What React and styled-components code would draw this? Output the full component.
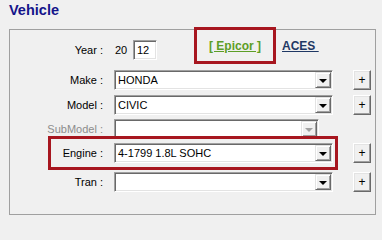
import React from 'react';
import styled, { createGlobalStyle } from 'styled-components';

const GlobalStyle = createGlobalStyle`
  body {
    margin: 0;
    background: #f0f0f0;
    font-family: "Liberation Sans", Arial, sans-serif;
    font-size: 11px;
    color: #000;
  }
`;

const Page = styled.div`
  width: 382px;
  height: 219px;
  background: #f0f0f0;
  overflow: hidden;
`;

const Title = styled.div`
  height: 29px;
  box-sizing: border-box;
  padding: 2px 0 0 9px;
  font-size: 14.5px;
  font-weight: bold;
  line-height: 16px;
  color: #14148a;
`;

const GroupBox = styled.div`
  margin-left: 9px;
  width: 367px;
  height: 186px;
  box-sizing: border-box;
  border: 1px solid #a0a0a0;
  padding-top: 10px;
`;

const Row = styled.div`
  display: flex;
  align-items: center;
  height: 20px;
  margin-top: ${p => p.$gap || 0}px;
`;

const Label = styled.div`
  width: 93px;
  margin-right: 11px;
  flex-shrink: 0;
  text-align: right;
  color: ${p => (p.$disabled ? '#8d8d8d' : '#000')};
`;

// red annotation frame drawn over the marked element
const Marked = styled.div`
  position: relative;
  display: flex;
  align-items: center;

  &::after {
    content: '';
    position: absolute;
    top: ${p => p.$top}px;
    right: ${p => p.$right}px;
    bottom: ${p => p.$bottom}px;
    left: ${p => p.$left}px;
    border: 3px solid #a7161f;
    pointer-events: none;
  }
`;

const Sunken = styled.div`
  box-sizing: border-box;
  height: 20px;
  background: #fff;
  border: 1px solid;
  border-color: #a0a0a0 #fff #fff #a0a0a0;
  box-shadow: inset 1px 1px 0 #696969, inset -1px -1px 0 #e3e3e3;
`;

const Combo = styled(Sunken)`
  width: 219px;
  display: flex;
  align-items: center;
  padding: 1px;
`;

const ComboValue = styled.div`
  flex: 1;
  padding-left: 2px;
  white-space: nowrap;
`;

const DropButton = styled.div`
  width: 16px;
  height: 16px;
  box-sizing: border-box;
  display: flex;
  align-items: center;
  justify-content: center;
  background: #f0f0f0;
  border: 1px solid;
  border-color: #e3e3e3 #696969 #696969 #e3e3e3;
  box-shadow: inset 1px 1px 0 #fff, inset -1px -1px 0 #a0a0a0;

  &::before {
    content: '';
    border-left: 4px solid transparent;
    border-right: 4px solid transparent;
    border-top: 4px solid ${p => (p.$disabled ? '#a0a0a0' : '#000')};
    margin-top: 1px;
  }
`;

const PlusButton = styled.div`
  width: 18px;
  height: 20px;
  margin-left: 20px;
  box-sizing: border-box;
  display: flex;
  align-items: center;
  justify-content: center;
  font-size: 12px;
  line-height: 1;
  background: #f0f0f0;
  border: 1px solid;
  border-color: #fff #696969 #696969 #fff;
  box-shadow: inset -1px -1px 0 #a0a0a0, inset 1px 1px 0 #e3e3e3;
`;

const Spacer = styled.div`
  width: 38px;
  margin-left: 20px;
`;

const Century = styled.span`
  padding-left: 1px;
  width: 18px;
`;

const YearInput = styled(Sunken)`
  width: 24px;
  padding: 0 0 0 3px;
  line-height: 18px;
`;

const Links = styled.div`
  align-self: flex-start;
  display: flex;
  margin-left: 52px;
  line-height: 12px;
  font-size: 12px;
  font-weight: bold;
`;

const SourceLink = styled.span`
  color: ${p => p.$color};
  text-decoration: underline;
  white-space: pre;
  margin-left: ${p => p.$offset || 0}px;
`;

const ComboBox = ({ value, disabled }) => (
  <Combo>
    <ComboValue>{value}</ComboValue>
    <DropButton $disabled={disabled} />
  </Combo>
);

const fields = [
  { label: 'Make :', value: 'HONDA', gap: 10 },
  { label: 'Model :', value: 'CIVIC', gap: 5 },
  { label: 'SubModel :', value: '', gap: 4, disabled: true },
  { label: 'Engine :', value: '4-1799 1.8L SOHC', gap: 4, marked: true },
  { label: 'Tran :', value: '', gap: 9 },
];

const App = () => (
  <Page>
    <GlobalStyle />
    <Title>Vehicle</Title>
    <GroupBox>
      <Row>
        <Label>Year :</Label>
        <Century>20</Century>
        <YearInput>12</YearInput>
        <Links>
          <Marked $top={-13} $right={-15} $bottom={-12} $left={-15}>
            <SourceLink $color="#5c9e26">[ Epicor ]</SourceLink>
          </Marked>
          <SourceLink $color="#1f3864" $offset={21}>{'ACES '}</SourceLink>
        </Links>
      </Row>
      {fields.map(f => (
        <Row key={f.label} $gap={f.gap}>
          {f.marked ? (
            <Marked $top={-7} $right={-5} $bottom={-7} $left={38}>
              <Label>{f.label}</Label>
              <ComboBox value={f.value} />
            </Marked>
          ) : (
            <>
              <Label $disabled={f.disabled}>{f.label}</Label>
              <ComboBox value={f.value} disabled={f.disabled} />
            </>
          )}
          {f.disabled ? <Spacer /> : <PlusButton>+</PlusButton>}
        </Row>
      ))}
    </GroupBox>
  </Page>
);

export default App;
